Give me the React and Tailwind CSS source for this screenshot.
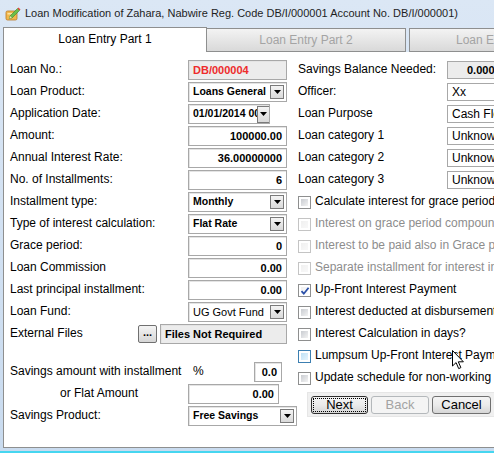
import React from "react";

const font = "font-['Liberation_Sans',Arial,sans-serif]";

function Arrow() {
  return (
    <svg width="7" height="4" viewBox="0 0 7 4">
      <path d="M0 0h7L3.5 4z" fill="#000" />
    </svg>
  );
}

function DropBtn({ tall }) {
  return (
    <div className={`flex shrink-0 items-center justify-center border border-[#7a7a7a] bg-gradient-to-b from-[#f4f4f4] to-[#d9d9d9] ${tall ? "h-[17px] w-[13px]" : "h-[14px] w-[14px]"}`}>
      <Arrow />
    </div>
  );
}

function Box({ w = "w-[99px]", gray, children, className = "" }) {
  return (
    <div className={`flex h-[20px] ${w} shrink-0 items-center overflow-hidden border border-[#a8a8a8] shadow-[inset_1px_1px_0_#e4e4e4] ${gray ? "bg-[#ececec]" : "bg-white"} ${className}`}>
      {children}
    </div>
  );
}

function NumBox({ value, w }) {
  return (
    <Box w={w} className="justify-end pr-[4px] text-[11px] font-bold">
      {value}
    </Box>
  );
}

function Select({ value, w, bold = true }) {
  return (
    <Box w={w} className="justify-between pl-[4px] pr-[2px]">
      <span className={`whitespace-nowrap ${bold ? "text-[10.5px] font-bold" : "text-[11px]"}`}>{value}</span>
      <DropBtn />
    </Box>
  );
}

function Row({ label, children, labelClass = "w-[178px]" }) {
  return (
    <div className="flex h-[22px] items-center">
      <div className={`${labelClass} shrink-0 pb-[3px] text-[12px]`}>{label}</div>
      {children}
    </div>
  );
}

function RightRow({ label, value, gray, bold, indent = "pl-[4px]" }) {
  return (
    <div className="flex h-[22px] items-center">
      <div className="w-[149px] shrink-0 pb-[3px] text-[12px]">{label}</div>
      <div className={`flex h-[18px] w-[90px] shrink-0 items-center whitespace-nowrap border border-[#a8a8a8] ${gray ? "bg-[#ececec]" : "bg-white"} ${indent} ${bold ? "text-[11px] font-bold" : "text-[12px]"}`}>
        {value}
      </div>
    </div>
  );
}

function Check({ label, checked, disabled, hover }) {
  const border = disabled ? "border-[#c4c4c4]" : hover ? "border-[#3c7fb1]" : "border-[#8e8f8f]";
  const inner = disabled
    ? "from-[#f0f0f0] to-[#f8f8f8]"
    : hover
    ? "from-[#bfe1f6] to-[#e6f4fc]"
    : checked
    ? "from-[#f0f0f0] to-[#fcfcfc]"
    : "from-[#c9ccd1] to-[#f3f3f3]";
  return (
    <div className="flex h-[22px] items-center">
      <div className={`relative flex h-[13px] w-[13px] shrink-0 items-center justify-center border ${border} bg-white p-[2px]`}>
        <div className={`h-full w-full bg-gradient-to-br ${inner}`} />
        {checked && (
          <svg className="absolute left-[1px] top-[1px]" width="10" height="10" viewBox="0 0 10 10">
            <path d="M1.5 5.2l2.3 2.5L8.6 1.8" stroke="#2a4fa8" strokeWidth="1.8" fill="none" />
          </svg>
        )}
      </div>
      <span className={`ml-[4px] whitespace-nowrap pb-[2px] text-[12px] ${disabled ? "text-[#8d8d8d]" : "text-black"}`}>{label}</span>
    </div>
  );
}

function WinButton({ children, def, disabled, w }) {
  return (
    <div className={`flex h-[18px] ${w} shrink-0 items-center justify-center rounded-[3px] border ${def ? "border-[#2f2f2f]" : disabled ? "border-[#b4b8bb]" : "border-[#707070]"} ${disabled ? "bg-[#f4f4f4]" : "bg-gradient-to-b from-[#f4f4f4] via-[#ebebeb] to-[#d6d6d6]"} p-[1px]`}>
      <div className={`flex h-full w-full items-center justify-center text-[13px] ${def ? "border border-dotted border-black" : ""} ${disabled ? "text-[#a3a3a3]" : "text-black"}`}>
        {children}
      </div>
    </div>
  );
}

function TitleIcon() {
  return (
    <svg width="16" height="16" viewBox="0 0 16 16">
      <rect x="1" y="6" width="11" height="9" rx="1.5" fill="#f2b84b" stroke="#b9782a" strokeWidth="0.8" />
      <rect x="2.5" y="8" width="8" height="1.5" fill="#fbe3a1" />
      <path d="M5 11L12.5 3.5l2 2L7 13l-2.6.6z" fill="#6cbf4a" stroke="#3f7d2a" strokeWidth="0.6" />
      <path d="M12.5 3.5l1-1 2 2-1 1z" fill="#e2463a" />
      <path d="M5 11l2 2-2.6.6z" fill="#f7e0b0" />
    </svg>
  );
}

function Cursor() {
  return (
    <svg className="absolute left-[452px] top-[350px]" width="12" height="20" viewBox="0 0 12 20">
      <path d="M0.5 0.5v15.5l3.6-3.4 2.6 6 2.2-1-2.6-5.8h5.1z" fill="#fff" stroke="#000" strokeWidth="1" strokeLinejoin="round" />
    </svg>
  );
}

export default function App() {
  return (
    <div className={`relative flex h-[453px] w-[494px] flex-col overflow-hidden bg-gradient-to-b from-[#dbe7f5] to-[#c9dbef] ${font} text-black`}>
      {/* Title bar */}
      <div className="flex h-[26px] shrink-0 items-center pl-[5px]">
        <TitleIcon />
        <span className="ml-[4px] whitespace-nowrap text-[11px] text-[#1e1e1e]">
          Loan Modification of Zahara, Nabwire Reg. Code DB/I/000001 Account No. DB/I/000001)
        </span>
      </div>

      <div className="flex min-h-0 flex-1 flex-col pl-[3px]">
        {/* Tabs */}
        <div className="flex h-[26px] shrink-0 items-end">
          <div className="flex h-[25px] w-[204px] shrink-0 items-center justify-center border border-b-0 border-[#8e8f8f] bg-white pb-[2px] text-[12px]">
            Loan Entry Part 1
          </div>
          <div className="flex h-[24px] w-[199px] shrink-0 items-center justify-center border border-l-0 border-[#8e8f8f] bg-gradient-to-b from-[#f3f3f3] to-[#d9d9d9] pb-[1px] text-[12px] text-[#a4a4a4]">
            Loan Entry Part 2
          </div>
          <div className="ml-[3px] flex h-[24px] w-[150px] shrink-0 items-center whitespace-nowrap border border-[#8e8f8f] bg-gradient-to-b from-[#f3f3f3] to-[#d9d9d9] pb-[1px] pl-[46px] text-[12px] text-[#a4a4a4]">
            Loan Entry Part 3
          </div>
        </div>

        {/* Panel */}
        <div className="flex min-h-0 flex-1 border-b border-l border-[#8e8f8f] bg-white pt-[7px]">
          {/* Left column */}
          <div className="flex w-[290px] shrink-0 flex-col pl-[6px]">
            <Row label="Loan No.:">
              <Box gray className="pl-[4px] text-[11px] font-bold text-[#ee2b2b]">DB/000004</Box>
            </Row>
            <Row label="Loan Product:">
              <Select value="Loans General" />
            </Row>
            <Row label="Application Date:">
              <Box w="w-[82px]" className="pl-[4px]">
                <span className="w-[64px] shrink-0 overflow-hidden whitespace-nowrap text-[10.5px] font-bold">01/01/2014 00:00</span>
                <DropBtn tall />
              </Box>
            </Row>
            <Row label="Amount:">
              <NumBox value="100000.00" />
            </Row>
            <Row label="Annual Interest Rate:">
              <NumBox value="36.00000000" />
            </Row>
            <Row label="No. of Installments:">
              <NumBox value="6" />
            </Row>
            <Row label="Installment type:">
              <Select value="Monthly" />
            </Row>
            <Row label="Type of interest calculation:">
              <Select value="Flat Rate" />
            </Row>
            <Row label="Grace period:">
              <NumBox value="0" />
            </Row>
            <Row label="Loan Commission">
              <NumBox value="0.00" />
            </Row>
            <Row label="Last principal installment:">
              <NumBox value="0.00" />
            </Row>
            <Row label="Loan Fund:">
              <Select value="UG Govt Fund" bold={false} />
            </Row>
            <Row label="External Files" labelClass="w-[128px]">
              <div className="flex h-[18px] w-[19px] shrink-0 items-center justify-center rounded-[2px] border border-[#707070] bg-gradient-to-b from-[#f4f4f4] to-[#d6d6d6] pb-[4px] text-[11px] font-bold">
                ...
              </div>
              <Box w="w-[127px]" gray className="ml-[3px] pl-[4px] text-[11px] font-bold">
                Files Not Required
              </Box>
            </Row>

            <div className="mt-[16px]">
              <Row label="Savings amount with installment" labelClass="w-[183px]">
                <span className="w-[61px] shrink-0 pb-[3px] text-[12px]">%</span>
                <NumBox value="0.0" w="w-[28px]" />
              </Row>
              <Row label="or Flat Amount" labelClass="w-[178px] pl-[50px]">
                <NumBox value="0.00" w="w-[91px]" />
              </Row>
              <Row label="Savings Product:">
                <Select value="Free Savings" w="w-[109px]" />
              </Row>
            </div>
          </div>

          {/* Right column */}
          <div className="flex min-w-0 flex-1 flex-col pl-[4px]">
            <RightRow label="Savings Balance Needed:" value="0.00000000" gray bold indent="pl-[19px]" />
            <RightRow label="Officer:" value="Xx" />
            <RightRow label="Loan Purpose" value="Cash Flow" />
            <RightRow label="Loan category 1" value="Unknown" />
            <RightRow label="Loan category 2" value="Unknown" />
            <RightRow label="Loan category 3" value="Unknown" />
            <Check label="Calculate interest for grace period" />
            <Check label="Interest on grace period compounded" disabled />
            <Check label="Interest to be paid also in Grace period" disabled />
            <Check label="Separate installment for interest in grace" disabled />
            <Check label="Up-Front Interest Payment" checked />
            <Check label="Interest deducted at disbursement" />
            <Check label="Interest Calculation in days?" />
            <Check label="Lumpsum Up-Front Interest Payment" hover />
            <Check label="Update schedule for non-working days" />
            <div className="ml-[9px] mt-[3px] flex h-[25px] w-[200px] shrink-0 items-center gap-[3px] border border-[#e6e6e6] bg-[#f0f0f0] pl-[3px]">
              <WinButton def w="w-[57px]">Next</WinButton>
              <WinButton disabled w="w-[58px]">Back</WinButton>
              <WinButton w="w-[59px]">Cancel</WinButton>
            </div>
          </div>
        </div>
      </div>

      {/* Bottom frame */}
      <div className="h-[5px] shrink-0 border-b-2 border-[#46d6f0]" />

      <Cursor />
    </div>
  );
}
